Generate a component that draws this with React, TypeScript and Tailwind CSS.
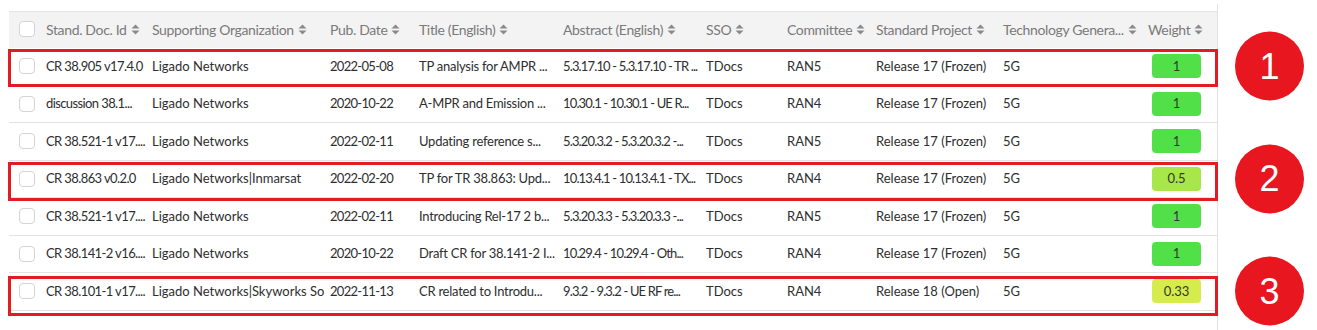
import React from 'react';

type Row = {
  id: string;
  org: string;
  date: string;
  title: string;
  abs: string;
  sso: string;
  committee: string;
  project: string;
  tech: string;
  weight: string;
  mark?: { n: number; box: string };
};

const rows: Row[] = [
  { id: 'CR 38.905 v17.4.0', org: 'Ligado Networks', date: '2022-05-08', title: 'TP analysis for AMPR ...', abs: '5.3.17.10 - 5.3.17.10 - TR ...', sso: 'TDocs', committee: 'RAN5', project: 'Release 17 (Frozen)', tech: '5G', weight: '1', mark: { n: 1, box: 'top-[1px] bottom-[-2px]' } },
  { id: 'discussion 38.1...', org: 'Ligado Networks', date: '2020-10-22', title: 'A-MPR and Emission ...', abs: '10.30.1 - 10.30.1 - UE R...', sso: 'TDocs', committee: 'RAN4', project: 'Release 17 (Frozen)', tech: '5G', weight: '1' },
  { id: 'CR 38.521-1 v17....', org: 'Ligado Networks', date: '2022-02-11', title: 'Updating reference s...', abs: '5.3.20.3.2 - 5.3.20.3.2 -...', sso: 'TDocs', committee: 'RAN5', project: 'Release 17 (Frozen)', tech: '5G', weight: '1' },
  { id: 'CR 38.863 v0.2.0', org: 'Ligado Networks|Inmarsat', date: '2022-02-20', title: 'TP for TR 38.863: Upd...', abs: '10.13.4.1 - 10.13.4.1 - TX...', sso: 'TDocs', committee: 'RAN4', project: 'Release 17 (Frozen)', tech: '5G', weight: '0.5', mark: { n: 2, box: 'top-[1.5px] bottom-[-4px]' } },
  { id: 'CR 38.521-1 v17....', org: 'Ligado Networks', date: '2022-02-11', title: 'Introducing Rel-17 2 b...', abs: '5.3.20.3.3 - 5.3.20.3.3 -...', sso: 'TDocs', committee: 'RAN5', project: 'Release 17 (Frozen)', tech: '5G', weight: '1' },
  { id: 'CR 38.141-2 v16....', org: 'Ligado Networks', date: '2020-10-22', title: 'Draft CR for 38.141-2 I...', abs: '10.29.4 - 10.29.4 - Oth...', sso: 'TDocs', committee: 'RAN4', project: 'Release 17 (Frozen)', tech: '5G', weight: '1' },
  { id: 'CR 38.101-1 v17....', org: 'Ligado Networks|Skyworks Solutions', date: '2022-11-13', title: 'CR related to Introdu...', abs: '9.3.2 - 9.3.2 - UE RF re...', sso: 'TDocs', committee: 'RAN4', project: 'Release 18 (Open)', tech: '5G', weight: '0.33', mark: { n: 3, box: 'top-[3px] bottom-[-6px]' } },
];

// column widths after the checkbox column
const cols = ['w-[106px]', 'w-[178px]', 'w-[89px]', 'w-[144px]', 'w-[143px]', 'w-[81px]', 'w-[89px]', 'w-[127px]', 'w-[145px]', 'w-[75px]'];
// number-heavy columns get tighter tracking
const track = ['tracking-[-0.6px]', 'tracking-normal', 'tracking-[-0.7px]', 'tracking-[-0.25px]', 'tracking-[-0.85px]', 'tracking-normal', 'tracking-normal', 'tracking-normal', 'tracking-normal'];
const heads = ['Stand. Doc. Id', 'Supporting Organization', 'Pub. Date', 'Title (English)', 'Abstract (English)', 'SSO', 'Committee', 'Standard Project', 'Technology Genera...', 'Weight'];

function SortIcon() {
  return (
    <svg width="9" height="11" viewBox="0 0 9 11" className="ml-[4px] shrink-0">
      <path d="M0.5 4.5 L4.5 0.5 L8.5 4.5 Z" fill="#8a8a8a" />
      <path d="M0.5 6.5 L4.5 10.5 L8.5 6.5 Z" fill="#8a8a8a" />
    </svg>
  );
}

function Check() {
  return (
    <div className="w-[31px] shrink-0 pl-[10px]">
      <div className="w-[16px] h-[16px] rounded-[4px] border border-[#d4d4d4] bg-white" />
    </div>
  );
}

function badgeColor(w: string) {
  if (w === '0.5') return 'bg-[#a8e74a]';
  if (w === '0.33') return 'bg-[#d5ec4c]';
  return 'bg-[#52e048]';
}

export default function App() {
  return (
    <div className="w-[1317px] h-[330px] bg-white font-['Lato','Open_Sans',sans-serif] overflow-hidden">
      <div className="ml-[9px] w-[1209px] h-[326px] mt-[4px] pt-[7px] border-r border-[#e2e2e2]">
        <div className="flex items-center h-[37px] pb-[2px] bg-[#f3f3f3] border-t border-[#e4e4e4] text-[#7a7a7a] text-[14px] tracking-[-0.35px] w-[1208px]">
          <Check />
          {heads.map((h, i) => (
            <div key={h} className={`${cols[i]} shrink-0 pl-[6px] flex items-center whitespace-nowrap overflow-hidden`}>
              <span>{h}</span>
              <SortIcon />
            </div>
          ))}
        </div>
        {rows.map((r, idx) => {
          const cells = [r.id, r.org, r.date, r.title, r.abs, r.sso, r.committee, r.project, r.tech];
          return (
            <div key={idx} className="relative flex items-center h-[37.5px] border-b border-[#e3e3e3] text-[#2e2e2e] text-[13px] w-[1208px]">
              <Check />
              {cells.map((c, i) => (
                <div key={i} className={`${cols[i]} ${track[i]} shrink-0 pl-[6px] whitespace-nowrap overflow-hidden`}>
                  {c}
                </div>
              ))}
              <div className={`${cols[9]} shrink-0 pl-[10px]`}>
                <div className={`w-[49px] h-[24px] rounded-[4px] ${badgeColor(r.weight)} flex items-center justify-center text-[#2f3a2f]`}>
                  {r.weight}
                </div>
              </div>
              {r.mark && (
                <>
                  <div className={`absolute left-[-1px] right-[-1px] ${r.mark.box} border-[3px] border-[#e31b23] pointer-events-none`} />
                  <div className="absolute left-[1226px] top-1/2 -translate-y-1/2 w-[69px] h-[69px] rounded-full bg-[#e8161f] flex items-center justify-center text-white text-[36px] font-['Liberation_Sans',Arial,sans-serif]">
                    {r.mark.n}
                  </div>
                </>
              )}
            </div>
          );
        })}
      </div>
    </div>
  );
}
